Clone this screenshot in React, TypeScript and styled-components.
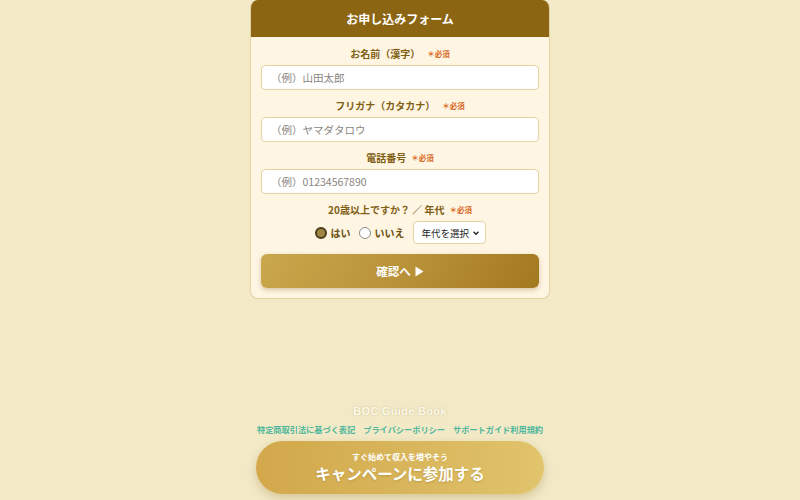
import React from "react";
import styled, { createGlobalStyle } from "styled-components";

const Global = createGlobalStyle`
  html, body { margin: 0; padding: 0; }
  body {
    background: #f2e9c7;
    font-family: "Noto Sans CJK JP", "Noto Sans", sans-serif;
  }
  * { box-sizing: border-box; }
`;

const Page = styled.div`
  min-height: 100vh;
  display: flex;
  flex-direction: column;
  align-items: center;
`;

const Card = styled.form`
  width: 300px;
  background: #fff5e3;
  border: 1px solid #e6d3a4;
  border-top: none;
  border-radius: 8px;
  overflow: hidden;
`;

const Header = styled.div`
  height: 37px;
  background: #8c6513;
  color: #fff;
  font-size: 12px;
  font-weight: 700;
  display: flex;
  align-items: center;
  justify-content: center;
`;

const Body = styled.div`
  padding: 9px 10px 10px;
  display: flex;
  flex-direction: column;
`;

const Field = styled.div`
  display: flex;
  flex-direction: column;
  margin-bottom: 8px;
`;

const Label = styled.div`
  height: 16px;
  line-height: 16px;
  text-align: center;
  font-size: 10px;
  font-weight: 700;
  color: #7f5f14;
  margin-bottom: 3px;
  display: flex;
  justify-content: center;
  align-items: center;
`;

const Req = styled.span<{ $gap?: number }>`
  color: #d9651c;
  font-size: 7.5px;
  font-weight: 700;
  margin-left: ${(p) => p.$gap ?? 7}px;
`;

const Input = styled.input`
  width: 100%;
  height: 25px;
  border: 1px solid #e6d3a2;
  border-radius: 4px;
  background: #fff;
  padding: 0 9px;
  font-family: inherit;
  font-size: 10.5px;
  color: #333;
  outline: none;
  &::placeholder { color: #8a8580; }
`;

const ChoiceRow = styled.div`
  display: flex;
  align-items: center;
  justify-content: center;
  height: 23px;
  margin-bottom: 10px;
`;

const RadioLabel = styled.label`
  display: flex;
  align-items: center;
  font-size: 10px;
  font-weight: 700;
  color: #6b4f10;
  margin-right: 8px;
`;

const RadioDot = styled.span<{ $on?: boolean }>`
  width: 12px;
  height: 12px;
  border-radius: 50%;
  margin-right: 4px;
  border: ${(p) => (p.$on ? "2px solid #4a3a1a" : "1px solid #8c8c8c")};
  background: ${(p) => (p.$on ? "#a08640" : "#fff")};
`;

const SelectBox = styled.div`
  width: 73px;
  height: 23px;
  border: 1px solid #e6d3a2;
  border-radius: 4px;
  background: #fff;
  display: flex;
  align-items: center;
  justify-content: space-between;
  padding: 0 5px 0 8px;
  font-size: 9.5px;
  color: #222;
`;

const Submit = styled.button`
  height: 34px;
  width: 100%;
  border: none;
  border-radius: 6px;
  background: linear-gradient(120deg, #caa84c 0%, #b89037 55%, #a27820 100%);
  color: #fff;
  font-family: inherit;
  font-size: 11.5px;
  font-weight: 700;
  box-shadow: 0 2px 5px rgba(120, 90, 20, 0.3);
  display: flex;
  align-items: center;
  justify-content: center;
  gap: 4px;
`;

const Footer = styled.div`
  margin-top: auto;
  display: flex;
  flex-direction: column;
  align-items: center;
  padding-bottom: 6px;
`;

const Brand = styled.div`
  font-family: "Liberation Sans", Arial, sans-serif;
  font-size: 11px;
  font-weight: 700;
  color: #fcf8ea;
  text-shadow: 0 0 2px rgba(190, 170, 110, 0.7);
  letter-spacing: 0.3px;
  margin-bottom: 6px;
`;

const Links = styled.div`
  display: flex;
  gap: 8px;
  margin-bottom: 6px;
`;

const LinkItem = styled.a`
  font-size: 8.2px;
  font-weight: 700;
  color: #4fb79c;
  text-decoration: none;
`;

const Campaign = styled.button`
  width: 288px;
  height: 53px;
  border: none;
  border-radius: 27px;
  background: linear-gradient(90deg, #d2a84b 0%, #d9b65c 55%, #e1c46c 100%);
  box-shadow: 0 4px 10px rgba(150, 120, 40, 0.3);
  color: #fff;
  font-family: inherit;
  display: flex;
  flex-direction: column;
  align-items: center;
  justify-content: center;
`;

const CampSub = styled.span`
  font-size: 8px;
  font-weight: 700;
  line-height: 11px;
`;

const CampMain = styled.span`
  font-size: 15.5px;
  font-weight: 700;
  line-height: 22px;
  text-shadow: 0 1px 2px rgba(120, 90, 20, 0.3);
`;

export default function App() {
  return (
    <>
      <Global />
      <Page>
        <Card onSubmit={(e) => e.preventDefault()}>
          <Header>お申し込みフォーム</Header>
          <Body>
            <Field>
              <Label>
                お名前（漢字）<Req>＊必須</Req>
              </Label>
              <Input placeholder="（例）山田太郎" />
            </Field>
            <Field>
              <Label>
                フリガナ（カタカナ）<Req>＊必須</Req>
              </Label>
              <Input placeholder="（例）ヤマダタロウ" />
            </Field>
            <Field>
              <Label>
                電話番号<Req $gap={5}>＊必須</Req>
              </Label>
              <Input placeholder="（例）01234567890" />
            </Field>
            <Label>
              20歳以上ですか？ ／ 年代<Req $gap={5}>＊必須</Req>
            </Label>
            <ChoiceRow>
              <RadioLabel>
                <RadioDot $on />
                はい
              </RadioLabel>
              <RadioLabel>
                <RadioDot />
                いいえ
              </RadioLabel>
              <SelectBox>
                年代を選択
                <svg width="8" height="8" viewBox="0 0 8 8">
                  <path d="M1.5 2.8 L4 5.3 L6.5 2.8" fill="none" stroke="#222" strokeWidth="1.3" />
                </svg>
              </SelectBox>
            </ChoiceRow>
            <Submit type="submit">
              確認へ
              <svg width="9" height="11" viewBox="0 0 9 11">
                <path d="M0.5 0.5 L8.5 5.5 L0.5 10.5 Z" fill="#fff" />
              </svg>
            </Submit>
          </Body>
        </Card>
        <Footer>
          <Brand>BOC Guide Book</Brand>
          <Links>
            <LinkItem href="#">特定商取引法に基づく表記</LinkItem>
            <LinkItem href="#">プライバシーポリシー</LinkItem>
            <LinkItem href="#">サポートガイド利用規約</LinkItem>
          </Links>
          <Campaign>
            <CampSub>すぐ始めて収入を増やそう</CampSub>
            <CampMain>キャンペーンに参加する</CampMain>
          </Campaign>
        </Footer>
      </Page>
    </>
  );
}
